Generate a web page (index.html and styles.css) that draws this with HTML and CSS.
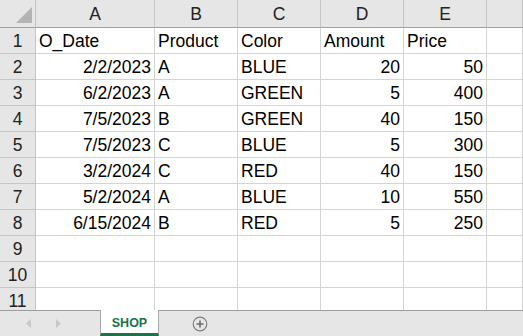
FILE: index.html
```html
<!DOCTYPE html>
<html lang="en">
<head>
  <meta charset="UTF-8">
  <title>SHOP</title>
  <link rel="stylesheet" href="styles.css">
</head>
<body>
  <div class="sheet">
    <div class="corner"><svg width="17" height="17" viewBox="0 0 17 17"><polygon points="16,0 16,16 0,16" fill="#b4b4b4"/></svg></div>
    <div class="hd">A</div><div class="hd">B</div><div class="hd">C</div><div class="hd">D</div><div class="hd">E</div><div class="hd"></div>

    <div class="rh">1</div><div class="c">O_Date</div><div class="c">Product</div><div class="c">Color</div><div class="c">Amount</div><div class="c">Price</div><div class="c"></div>
    <div class="rh">2</div><div class="c num">2/2/2023</div><div class="c">A</div><div class="c">BLUE</div><div class="c num">20</div><div class="c num">50</div><div class="c"></div>
    <div class="rh">3</div><div class="c num">6/2/2023</div><div class="c">A</div><div class="c">GREEN</div><div class="c num">5</div><div class="c num">400</div><div class="c"></div>
    <div class="rh">4</div><div class="c num">7/5/2023</div><div class="c">B</div><div class="c">GREEN</div><div class="c num">40</div><div class="c num">150</div><div class="c"></div>
    <div class="rh">5</div><div class="c num">7/5/2023</div><div class="c">C</div><div class="c">BLUE</div><div class="c num">5</div><div class="c num">300</div><div class="c"></div>
    <div class="rh">6</div><div class="c num">3/2/2024</div><div class="c">C</div><div class="c">RED</div><div class="c num">40</div><div class="c num">150</div><div class="c"></div>
    <div class="rh">7</div><div class="c num">5/2/2024</div><div class="c">A</div><div class="c">BLUE</div><div class="c num">10</div><div class="c num">550</div><div class="c"></div>
    <div class="rh">8</div><div class="c num">6/15/2024</div><div class="c">B</div><div class="c">RED</div><div class="c num">5</div><div class="c num">250</div><div class="c"></div>
    <div class="rh">9</div><div class="c"></div><div class="c"></div><div class="c"></div><div class="c"></div><div class="c"></div><div class="c"></div>
    <div class="rh">10</div><div class="c"></div><div class="c"></div><div class="c"></div><div class="c"></div><div class="c"></div><div class="c"></div>
    <div class="rh">11</div><div class="c"></div><div class="c"></div><div class="c"></div><div class="c"></div><div class="c"></div><div class="c"></div>
  </div>
  <div class="tabs">
    <div class="nav">
      <svg width="6" height="9" viewBox="0 0 6 9"><polygon points="5,0 5,9 0,4.5" fill="#c8c8c8"/></svg>
      <svg width="6" height="9" viewBox="0 0 6 9"><polygon points="1,0 1,9 6,4.5" fill="#c8c8c8"/></svg>
    </div>
    <div class="tab">SHOP</div>
    <div class="add">
      <svg width="16" height="16" viewBox="0 0 16 16"><circle cx="8" cy="8" r="6.8" fill="none" stroke="#7f7f7f" stroke-width="1.2"/><path d="M8 4.5v7M4.5 8h7" stroke="#6e6e6e" stroke-width="1.6"/></svg>
    </div>
  </div>
</body>
</html>
```

FILE: styles.css
```css
body { margin: 0; width: 523px; height: 336px; overflow: hidden; background: #fff; font-family: "Liberation Sans", Arial, sans-serif; color: #000; }
.sheet { display: grid; grid-template-columns: 36px 119px 83px 83px 83px 83px 1fr; grid-template-rows: 28px repeat(11, 26px); height: 310px; overflow: hidden; }
.sheet > div { box-sizing: border-box; display: flex; align-items: flex-end; padding: 0 3px 1px; font-size: 17.5px; white-space: nowrap; overflow: hidden; border-right: 1px solid #d4d4d4; border-bottom: 1px solid #d4d4d4; }
.corner, .hd, .rh { background: #e6e6e6; color: #222; }
.corner { align-items: flex-start !important; justify-content: flex-end; padding: 7px 2px 0 0 !important; border-right-color: #c6c6c6 !important; border-bottom-color: #9e9e9e !important; }
.hd { justify-content: center; border-right-color: #c6c6c6 !important; border-bottom-color: #9e9e9e !important; padding-bottom: 2px !important; }
.rh { justify-content: center; border-right-color: #c6c6c6 !important; border-bottom-color: #c6c6c6 !important; }
.num { justify-content: flex-end; }
.tabs { height: 26px; box-sizing: border-box; background: #e6e6e6; border-top: 1px solid #9e9e9e; display: flex; }
.nav { width: 100px; display: flex; align-items: center; justify-content: center; gap: 23px; padding-right: 14px; box-sizing: border-box; }
.tab { width: 59px; margin-top: -1px; height: 26px; box-sizing: border-box; background: #fff; border-left: 1px solid #a8a8a8; border-right: 1px solid #a8a8a8; border-bottom: 3px solid #217346; color: #217346; font-weight: bold; font-size: 12.5px; display: flex; align-items: center; justify-content: center; padding-top: 2px; }
.add { display: flex; align-items: center; padding-left: 33px; }
```
